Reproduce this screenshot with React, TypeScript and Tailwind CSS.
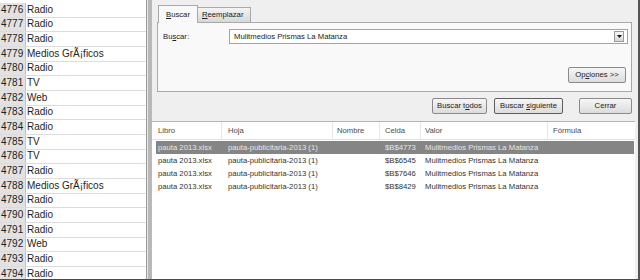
import React from "react";

const sheet: [string, string][] = [
  ["4776", "Radio"],
  ["4777", "Radio"],
  ["4778", "Radio"],
  ["4779", "Medios GrÃ¡ficos"],
  ["4780", "Radio"],
  ["4781", "TV"],
  ["4782", "Web"],
  ["4783", "Radio"],
  ["4784", "Radio"],
  ["4785", "TV"],
  ["4786", "TV"],
  ["4787", "Radio"],
  ["4788", "Medios GrÃ¡ficos"],
  ["4789", "Radio"],
  ["4790", "Radio"],
  ["4791", "Radio"],
  ["4792", "Web"],
  ["4793", "Radio"],
  ["4794", "Radio"],
];

const results = [
  ["pauta 2013.xlsx", "pauta-publicitaria-2013 (1)", "", "$B$4773", "Mulitmedios Prismas La Matanza", ""],
  ["pauta 2013.xlsx", "pauta-publicitaria-2013 (1)", "", "$B$6545", "Mulitmedios Prismas La Matanza", ""],
  ["pauta 2013.xlsx", "pauta-publicitaria-2013 (1)", "", "$B$7646", "Mulitmedios Prismas La Matanza", ""],
  ["pauta 2013.xlsx", "pauta-publicitaria-2013 (1)", "", "$B$8429", "Mulitmedios Prismas La Matanza", ""],
];

function Btn({ children, w, strong }: { children: React.ReactNode; w: string; strong?: boolean }) {
  return (
    <div
      className={`${w} h-[16px] flex items-center justify-center rounded-[2px] border ${
        strong ? "border-[#5e5e5e]" : "border-[#8a8a8a]"
      } bg-gradient-to-b from-[#f6f6f6] to-[#dcdcdc] text-[#222222] leading-none`}
    >
      {children}
    </div>
  );
}

export default function App() {
  return (
    <div
      className="w-[640px] h-[280px] overflow-hidden flex bg-[#efefef] border-b border-[#4a4a4a]"
      style={{ fontFamily: '"Liberation Sans", Arial, sans-serif' }}
    >
      {/* spreadsheet */}
      <div className="w-[147px] shrink-0 bg-white border-r border-[#9c9c9c] pt-[3px] overflow-hidden">
        {sheet.map(([n, t]) => (
          <div key={n} className="h-[14.67px] flex border-b border-[#dcdcdc] text-[10px] text-[#1e1e1e] leading-none">
            <div className="w-[26px] shrink-0 bg-[#e2e2e2] border-r border-[#c2c2c2] flex items-center pl-[1px]">{n}</div>
            <div className="flex items-center pl-[1px] whitespace-nowrap">{t}</div>
          </div>
        ))}
      </div>
      <div className="w-[1px] shrink-0 bg-[#e6e6e6]" />
      <div className="w-[4px] shrink-0 bg-[#b8b8b8]" />

      {/* dialog */}
      <div className="flex-1 flex flex-col border-r-2 border-[#555555] text-[7.7px] text-[#222222]">
        <div className="pt-[5px]">
          <div className="flex items-end ml-[6px]">
            <div className="relative z-10 -mb-px h-[18px] w-[40px] border border-b-0 border-[#a9a9a9] bg-[#f9f9f9] flex items-center pl-[7px] leading-none">
              <span><span className="underline">B</span>uscar</span>
            </div>
            <div className="h-[15px] w-[53px] border border-b-0 border-l-0 border-[#a9a9a9] bg-gradient-to-b from-[#f4f4f4] to-[#d8d8d8] flex items-center pl-[4px] leading-none">
              <span><span className="underline">R</span>eemplazar</span>
            </div>
          </div>
          <div className="ml-[5px] mr-[6px] h-[70px] border border-[#a9a9a9] bg-[#f9f9f9] flex flex-col">
            <div className="flex items-center mt-[6px] pl-[5px] pr-[3px]">
              <div className="w-[66px] leading-none">
                Bu<span className="underline">s</span>car:
              </div>
              <div className="flex-1 h-[15px] border border-[#a4a4a4] bg-white flex items-center pl-[4px] pr-[3px] leading-none">
                <span className="flex-1">Mulitmedios Prismas La Matanza</span>
                <div className="w-[10px] h-[11px] border border-[#9a9a9a] bg-gradient-to-b from-[#f6f6f6] to-[#d6d6d6] flex items-center justify-center">
                  <svg width="5" height="3" viewBox="0 0 5 3">
                    <path d="M0 0h5L2.5 3z" fill="#111" />
                  </svg>
                </div>
              </div>
            </div>
            <div className="flex justify-end mt-[23px] pr-[5px]">
              <Btn w="w-[58px]">
                <span>
                  Op<span className="underline">c</span>iones &gt;&gt;
                </span>
              </Btn>
            </div>
          </div>
          <div className="flex justify-end mt-[6px] pr-[6px] gap-[7px]">
            <Btn w="w-[55px]">
              <span>
                Buscar t<span className="underline">o</span>dos
              </span>
            </Btn>
            <Btn w="w-[69px]" strong>
              <span>
                Buscar <span className="underline">s</span>iguiente
              </span>
            </Btn>
            <div className="w-[2px]" />
            <Btn w="w-[53px]">
              <span>Cerrar</span>
            </Btn>
          </div>
        </div>

        {/* results list */}
        <div className="mt-[7px] mr-[3px] flex-1 bg-white border-t border-[#b4b4b4] flex flex-col">
          <div className="h-[18px] grid grid-cols-[70px_111px_47px_41px_127px_1fr] border-b border-[#e2e2e2] text-[#4a4a4a] leading-none">
            <div className="pl-[6px] flex items-center border-r border-[#e6e6e6]">Libro</div>
            <div className="pl-[6px] flex items-center border-r border-[#e6e6e6]">Hoja</div>
            <div className="pl-[4px] flex items-center border-r border-[#e6e6e6]">Nombre</div>
            <div className="pl-[5px] flex items-center border-r border-[#e6e6e6]">Celda</div>
            <div className="pl-[4px] flex items-center border-r border-[#e6e6e6]">Valor</div>
            <div className="pl-[5px] flex items-center">Fórmula</div>
          </div>
          <div className="pt-[1px]">
            {results.map((r, i) => (
              <div
                key={i}
                className={`ml-[4px] mr-[1px] h-[13px] grid grid-cols-[66px_111px_47px_41px_127px_1fr] leading-none ${
                  i === 0 ? "bg-[#858585] text-[#e6e6e6]" : "text-[#333333]"
                }`}
              >
                <div className="pl-[2px] flex items-center whitespace-nowrap">{r[0]}</div>
                <div className="pl-[6px] flex items-center whitespace-nowrap">{r[1]}</div>
                <div className="pl-[4px] flex items-center">{r[2]}</div>
                <div className="pl-[5px] flex items-center whitespace-nowrap">{r[3]}</div>
                <div className="pl-[4px] flex items-center whitespace-nowrap">{r[4]}</div>
                <div className="pl-[5px] flex items-center">{r[5]}</div>
              </div>
            ))}
          </div>
        </div>
      </div>
    </div>
  );
}
